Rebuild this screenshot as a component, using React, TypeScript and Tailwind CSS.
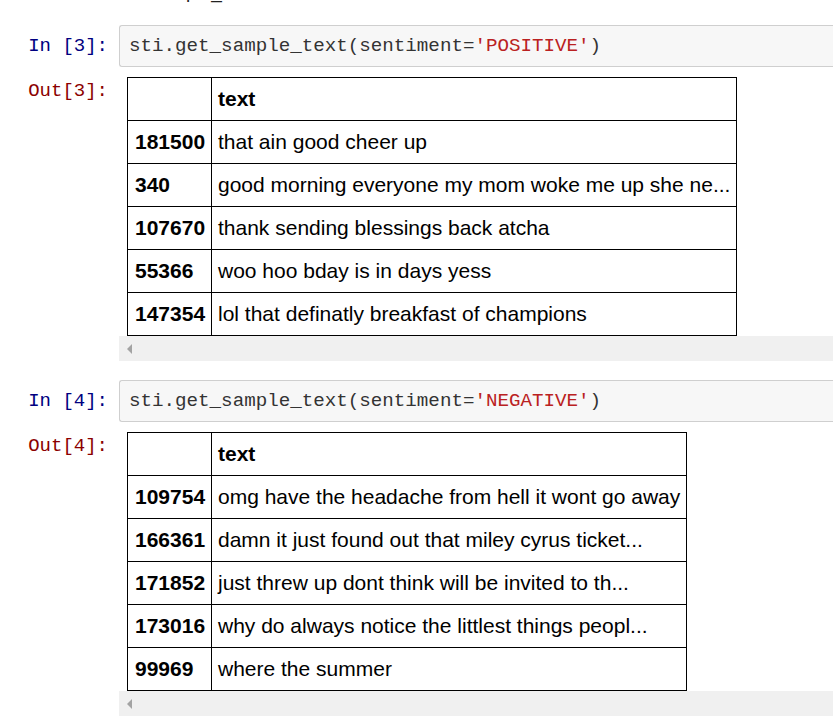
import React from "react";

const mono = { fontFamily: '"Liberation Mono", "DejaVu Sans Mono", monospace' };
const sans = { fontFamily: '"Liberation Sans", Arial, sans-serif' };

type Row = [string, string];

const cells: { n: number; sentiment: string; width: number; rows: Row[] }[] = [
  {
    n: 3,
    sentiment: "POSITIVE",
    width: 610,
    rows: [
      ["181500", "that ain good cheer up"],
      ["340", "good morning everyone my mom woke me up she ne..."],
      ["107670", "thank sending blessings back atcha"],
      ["55366", "woo hoo bday is in days yess"],
      ["147354", "lol that definatly breakfast of champions"],
    ],
  },
  {
    n: 4,
    sentiment: "NEGATIVE",
    width: 560,
    rows: [
      ["109754", "omg have the headache from hell it wont go away"],
      ["166361", "damn it just found out that miley cyrus ticket..."],
      ["171852", "just threw up dont think will be invited to th..."],
      ["173016", "why do always notice the littlest things peopl..."],
      ["99969", "where the summer"],
    ],
  },
];

function Cell({ n, sentiment, width, rows }: (typeof cells)[number]) {
  return (
    <div className="flex flex-col">
      {/* input */}
      <div className="flex items-center">
        <div className="w-[119px] shrink-0 pr-[11px] text-right text-[19px] text-[#000080]" style={mono}>
          In [{n}]:
        </div>
        <div
          className="flex h-[42px] flex-1 items-center rounded-l-[3px] border border-r-0 border-[#cfcfcf] bg-[#f7f7f7] pl-[9px] text-[19.2px] text-[#333]"
          style={mono}
        >
          sti.get_sample_text(sentiment=<span className="text-[#ba2121]">'{sentiment}'</span>)
        </div>
      </div>

      {/* output */}
      <div className="mt-[10px] flex">
        <div className="w-[119px] shrink-0 pr-[11px] pt-[2px] text-right text-[19px] leading-[24px] text-[#8b0000]" style={mono}>
          Out[{n}]:
        </div>
        <div className="flex flex-1 flex-col">
          <table
            className="ml-[8px] table-fixed border-collapse text-[21px] text-black"
            style={{ ...sans, width }}
          >
            <colgroup>
              <col className="w-[84px]" />
              <col />
            </colgroup>
            <tbody>
              <tr className="h-[43px]">
                <th className="border border-black" />
                <th className="border border-black px-[6px] text-left font-bold">text</th>
              </tr>
              {rows.map(([id, t]) => (
                <tr key={id} className="h-[43px]">
                  <th className="border border-black pl-[7px] pr-0 text-left font-bold whitespace-nowrap">{id}</th>
                  <td className="border border-black px-[6px] text-left whitespace-nowrap">{t}</td>
                </tr>
              ))}
            </tbody>
          </table>
          <div className="flex h-[25px] items-center bg-[#f0f0f0] pl-[8px]">
            <div className="h-0 w-0 border-y-[5px] border-r-[5px] border-y-transparent border-r-[#a3a3a3]" />
          </div>
        </div>
      </div>
    </div>
  );
}

export default function App() {
  return (
    <div className="h-[718px] w-[833px] overflow-hidden bg-white">
      {/* bottom edge of the cell above, cut off */}
      <div className="h-[3px] overflow-hidden">
        <div className="-mt-[19px] pl-[150px] text-[19px] leading-[22px] text-[#222]" style={sans}>
          sample_text
        </div>
      </div>
      <div className="mt-[22px] flex flex-col gap-[19px]">
        {cells.map((c) => (
          <Cell key={c.n} {...c} />
        ))}
      </div>
    </div>
  );
}
